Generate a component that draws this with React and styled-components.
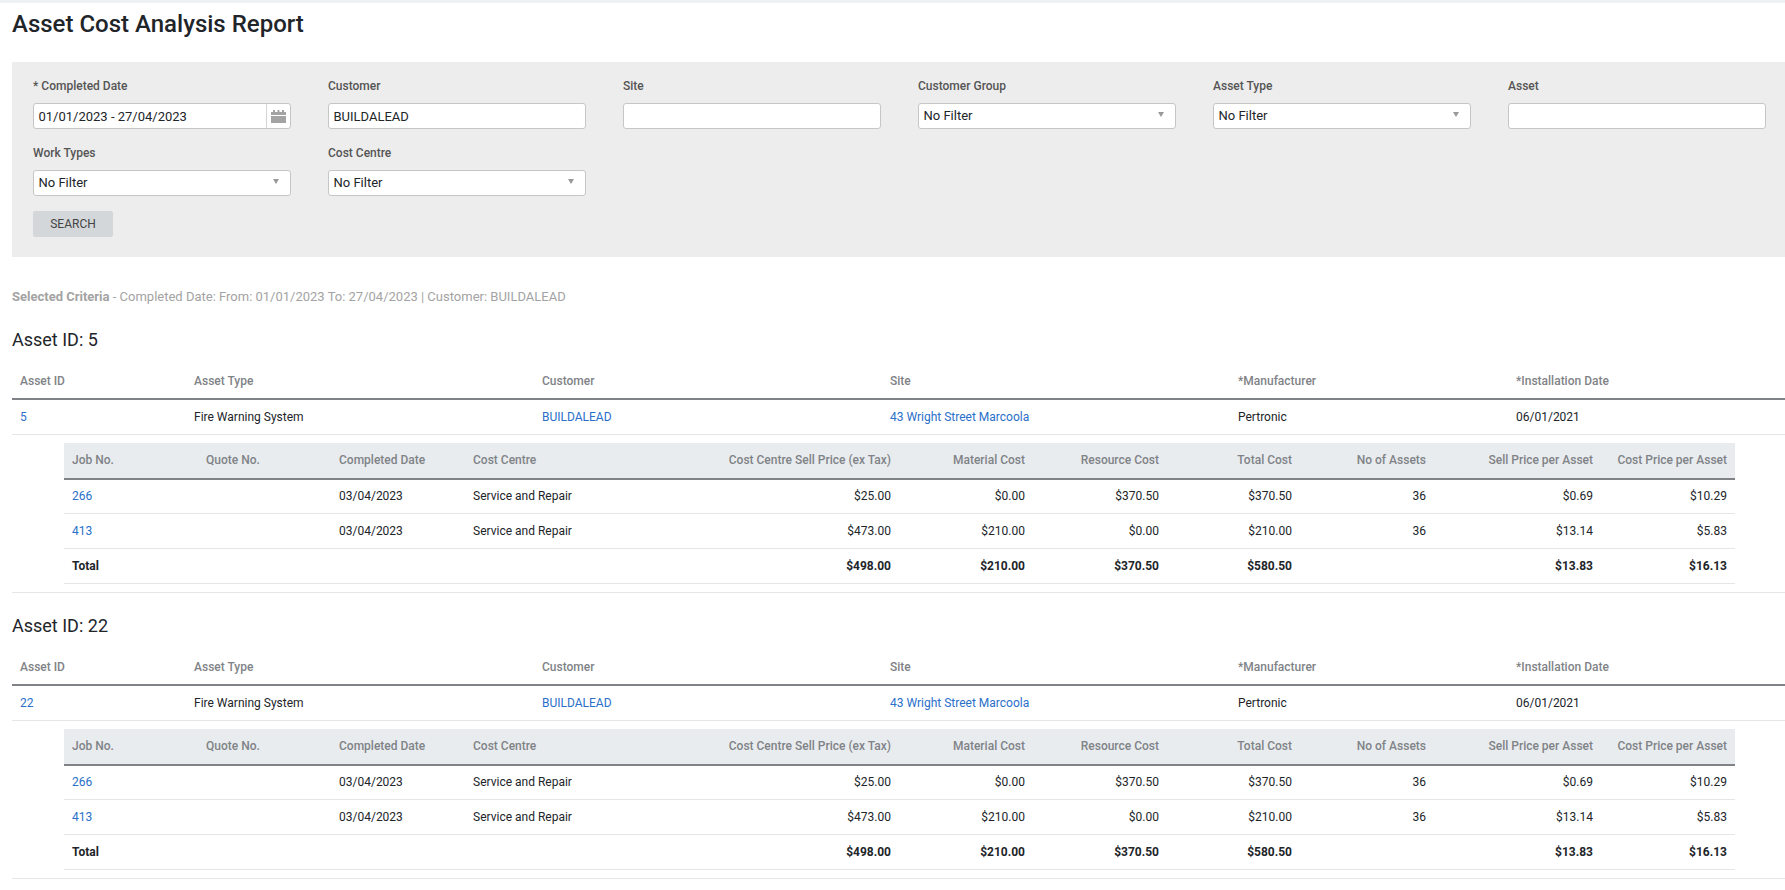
import React from 'react';
import styled, { createGlobalStyle } from 'styled-components';

const GlobalStyle = createGlobalStyle`
	html, body {
		margin: 0;
		padding: 0;
		background: #fff;
		font-family: Roboto, "Liberation Sans", sans-serif;
		font-size: 12px;
		color: #212529;
	}
	* {
		box-sizing: border-box;
	}
`;

const Page = styled.div`
	border-top: 3px solid #f0f1f3;
	padding-left: 12px;
	min-height: 890px;
`;

const Title = styled.h1`
	margin: 0;
	padding: 7px 0 0;
	height: 59px;
	font-size: 24px;
	line-height: 28px;
	font-weight: 500;
	color: #212529;
`;

const FilterPanel = styled.form`
	background: #ededed;
	height: 195px;
	padding: 15px 19px 0 21px;
`;

const FilterGrid = styled.div`
	display: grid;
	grid-template-columns: repeat(6, 1fr);
	column-gap: 37px;
	row-gap: 15px;
`;

const Field = styled.div`
	display: flex;
	flex-direction: column;
`;

const Label = styled.label`
	height: 18px;
	line-height: 18px;
	margin-bottom: 8px;
	font-size: 12px;
	font-weight: 500;
	color: #555;
`;

const Box = styled.div`
	height: 26px;
	display: flex;
	align-items: center;
	background: #fff;
	border: 1px solid #c6c6c6;
	border-radius: 3px;
	font-size: 13px;
	color: #212529;
`;

const Value = styled.span`
	flex: 1;
	padding-left: 4.5px;
	margin-top: ${(p) => (p.$select ? '-1px' : '0')};
`;

const CalendarAddon = styled.span`
	width: 24px;
	height: 100%;
	display: flex;
	align-items: center;
	justify-content: center;
	border-left: 1px solid #d4d4d4;
	color: #a3a3a3;
`;

const Caret = styled.span`
	width: 0;
	height: 0;
	margin-right: 11px;
	margin-top: -4px;
	border-left: 3.5px solid transparent;
	border-right: 3.5px solid transparent;
	border-top: 5px solid #999;
`;

const SearchButton = styled.button`
	display: block;
	width: 80px;
	height: 26px;
	margin-top: 15px;
	padding: 0;
	border: 0;
	border-radius: 2px;
	background: #d3d7da;
	color: #444;
	font-family: inherit;
	font-size: 12px;
`;

const Criteria = styled.p`
	margin: 0;
	padding: 32px 0 0;
	height: 70px;
	line-height: 16px;
	font-size: 13px;
	color: #a3a3a3;

	b {
		font-weight: 700;
	}
`;

const AssetBlock = styled.section`
	height: 286px;
`;

const AssetHeading = styled.h2`
	margin: 0;
	height: 36px;
	line-height: 26px;
	font-size: 18px;
	font-weight: 400;
	color: #212529;
`;

const Table = styled.table`
	width: 100%;
	table-layout: fixed;
	border-collapse: collapse;
	font-size: 12px;
`;

const NestedTable = styled(Table)`
	width: 1671px;
	margin: 8px 0 8px 52px;
`;

const HeadCell = styled.th`
	height: ${(p) => p.$height}px;
	padding: 0 8px;
	background: ${(p) => p.$bg || 'transparent'};
	border-bottom: 2px solid #7f8387;
	font-weight: 500;
	font-size: 12px;
	color: #7f8387;
	text-align: ${(p) => (p.$right ? 'right' : 'left')};
`;

const Cell = styled.td`
	height: 35px;
	padding: 0 8px;
	border-bottom: 1px solid #e4e6e8;
	color: #212529;
	font-weight: ${(p) => (p.$bold ? 700 : 400)};
	text-align: ${(p) => (p.$right ? 'right' : 'left')};
`;

const NestedHolder = styled.td`
	padding: 0;
	border-bottom: 1px solid #e4e6e8;
`;

const LinkText = styled.a`
	color: #2a6fc9;
	text-decoration: none;
`;

const assetCols = [174, 348, 348, 348, 278, 277];
const jobCols = [134, 133, 134, 133, 301, 134, 134, 133, 134, 167, 134];

const jobHeads = [
	['Job No.'],
	['Quote No.'],
	['Completed Date'],
	['Cost Centre'],
	['Cost Centre Sell Price (ex Tax)', true],
	['Material Cost', true],
	['Resource Cost', true],
	['Total Cost', true],
	['No of Assets', true],
	['Sell Price per Asset', true],
	['Cost Price per Asset', true],
];

const jobs = [
	{ no: '266', sell: '$25.00', material: '$0.00', resource: '$370.50', total: '$370.50', perSell: '$0.69', perCost: '$10.29' },
	{ no: '413', sell: '$473.00', material: '$210.00', resource: '$0.00', total: '$210.00', perSell: '$13.14', perCost: '$5.83' },
];

const CalendarIcon = () => (
	<svg width='15' height='13' viewBox='0 0 15 13' fill='currentColor'>
		<rect x='2' y='0' width='2' height='2' />
		<rect x='6.5' y='0' width='2' height='2' />
		<rect x='11' y='0' width='2' height='2' />
		<rect x='0' y='2' width='15' height='3' />
		<rect x='0' y='6' width='15' height='7' />
	</svg>
);

const Colgroup = ({ widths }) => (
	<colgroup>
		{widths.map((w, i) => (
			<col key={i} width={w} />
		))}
	</colgroup>
);

const Select = () => (
	<Box>
		<Value $select>No Filter</Value>
		<Caret />
	</Box>
);

const JobsTable = () => (
	<NestedTable>
		<Colgroup widths={jobCols} />
		<thead>
			<tr>
				{jobHeads.map(([name, right]) => (
					<HeadCell key={name} $height={36} $bg='#e9ecef' $right={right}>
						{name}
					</HeadCell>
				))}
			</tr>
		</thead>
		<tbody>
			{jobs.map((j) => (
				<tr key={j.no}>
					<Cell>
						<LinkText href='#'>{j.no}</LinkText>
					</Cell>
					<Cell />
					<Cell>03/04/2023</Cell>
					<Cell>Service and Repair</Cell>
					<Cell $right>{j.sell}</Cell>
					<Cell $right>{j.material}</Cell>
					<Cell $right>{j.resource}</Cell>
					<Cell $right>{j.total}</Cell>
					<Cell $right>36</Cell>
					<Cell $right>{j.perSell}</Cell>
					<Cell $right>{j.perCost}</Cell>
				</tr>
			))}
			<tr>
				<Cell $bold>Total</Cell>
				<Cell />
				<Cell />
				<Cell />
				<Cell $bold $right>$498.00</Cell>
				<Cell $bold $right>$210.00</Cell>
				<Cell $bold $right>$370.50</Cell>
				<Cell $bold $right>$580.50</Cell>
				<Cell />
				<Cell $bold $right>$13.83</Cell>
				<Cell $bold $right>$16.13</Cell>
			</tr>
		</tbody>
	</NestedTable>
);

const Asset = ({ id }) => (
	<AssetBlock>
		<AssetHeading>Asset ID: {id}</AssetHeading>
		<Table>
			<Colgroup widths={assetCols} />
			<thead>
				<tr>
					<HeadCell $height={36}>Asset ID</HeadCell>
					<HeadCell $height={36}>Asset Type</HeadCell>
					<HeadCell $height={36}>Customer</HeadCell>
					<HeadCell $height={36}>Site</HeadCell>
					<HeadCell $height={36}>*Manufacturer</HeadCell>
					<HeadCell $height={36}>*Installation Date</HeadCell>
				</tr>
			</thead>
			<tbody>
				<tr>
					<Cell>
						<LinkText href='#'>{id}</LinkText>
					</Cell>
					<Cell>Fire Warning System</Cell>
					<Cell>
						<LinkText href='#'>BUILDALEAD</LinkText>
					</Cell>
					<Cell>
						<LinkText href='#'>43 Wright Street Marcoola</LinkText>
					</Cell>
					<Cell>Pertronic</Cell>
					<Cell>06/01/2021</Cell>
				</tr>
				<tr>
					<NestedHolder colSpan={6}>
						<JobsTable />
					</NestedHolder>
				</tr>
			</tbody>
		</Table>
	</AssetBlock>
);

const App = () => (
	<Page>
		<GlobalStyle />
		<Title>Asset Cost Analysis Report</Title>
		<FilterPanel>
			<FilterGrid>
				<Field>
					<Label>* Completed Date</Label>
					<Box>
						<Value>01/01/2023 - 27/04/2023</Value>
						<CalendarAddon>
							<CalendarIcon />
						</CalendarAddon>
					</Box>
				</Field>
				<Field>
					<Label>Customer</Label>
					<Box>
						<Value>BUILDALEAD</Value>
					</Box>
				</Field>
				<Field>
					<Label>Site</Label>
					<Box />
				</Field>
				<Field>
					<Label>Customer Group</Label>
					<Select />
				</Field>
				<Field>
					<Label>Asset Type</Label>
					<Select />
				</Field>
				<Field>
					<Label>Asset</Label>
					<Box />
				</Field>
				<Field>
					<Label>Work Types</Label>
					<Select />
				</Field>
				<Field>
					<Label>Cost Centre</Label>
					<Select />
				</Field>
			</FilterGrid>
			<SearchButton type='button'>SEARCH</SearchButton>
		</FilterPanel>
		<Criteria>
			<b>Selected Criteria</b> - Completed Date: From: 01/01/2023 To: 27/04/2023 | Customer: BUILDALEAD
		</Criteria>
		<Asset id='5' />
		<Asset id='22' />
	</Page>
);

export default App;
